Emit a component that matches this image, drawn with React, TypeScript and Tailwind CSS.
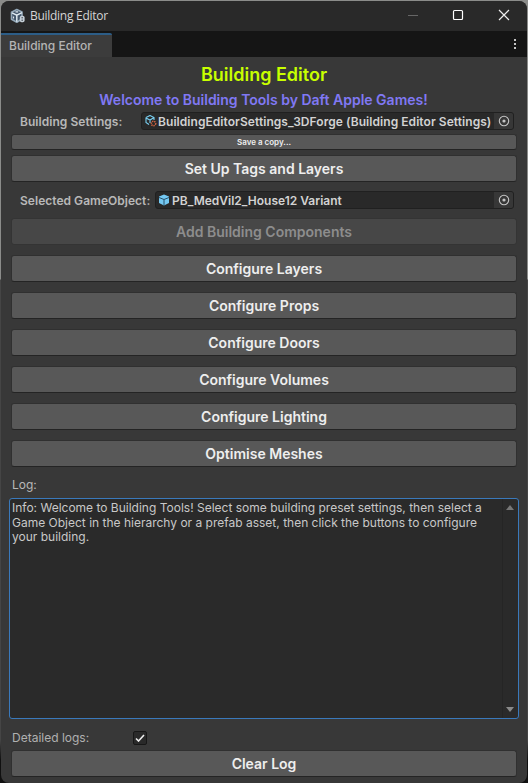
import React from "react";

function Target() {
  return (
    <span className="flex h-full w-[19px] shrink-0 items-center justify-center rounded-r-[2px] bg-[#373737] pl-px">
      <svg width="12" height="12" viewBox="0 0 12 12" fill="none">
        <circle cx="6" cy="6" r="4.7" stroke="#c4c4c4" strokeWidth="1.1" />
        <circle cx="6" cy="6" r="1.6" fill="#c4c4c4" />
      </svg>
    </span>
  );
}

function Btn({ label, className = "", disabled = false }: { label: string; className?: string; disabled?: boolean }) {
  return (
    <button
      disabled={disabled}
      className={
        "flex h-[27px] w-[506px] shrink-0 items-center justify-center rounded-[3px] border leading-none font-semibold " +
        (disabled
          ? "border-[#343434] bg-[#474747] text-[#8d8d8d] "
          : "border-[#303030] border-b-[#242424] bg-[#585858] text-[#eeeeee] ") +
        (className || "text-[14px]")
      }
    >
      {label}
    </button>
  );
}

const actions = ["Configure Layers", "Configure Props", "Configure Doors", "Configure Volumes", "Configure Lighting", "Optimise Meshes"];

export default function App() {
  return (
    <div className="h-[783px] w-[528px] overflow-hidden bg-[linear-gradient(to_bottom,#8b8c8a_0px,#8b8c8a_279px,#454545_280px,#454545_740px,#101010_760px)] pt-px pr-px pl-px font-['Inter','Liberation_Sans',sans-serif]">
      <div className="flex h-[782px] w-full flex-col overflow-hidden rounded-[8px] bg-[#383838]">
        <header className="flex h-[30px] shrink-0 items-center bg-[#292929] pr-px pl-[9px]">
          <svg width="16" height="16" viewBox="0 0 16 16" fill="none">
            <path d="M1.500 4.300 6.800 1.500 12 4v7l-5.200 3.200-5.300-3z" fill="#43566a" stroke="#93a8b8" strokeWidth="1.600" strokeLinejoin="round" />
            <path d="m2 4.800 4.800 2.400L12 4.600M6.800 7.200v6.500" stroke="#dfeaf1" strokeWidth="1.500" />
            <path d="M5.500 3.800h2.600M3.500 8.500v2" stroke="#dfeaf1" strokeWidth="1.200" />
            <rect x="9.800" y="7.800" width="4.800" height="6.400" rx="1.800" fill="#c6d0d8" />
            <path d="M11.500 9.800h1.400M11.500 12.200h1.400" stroke="#29323a" />
          </svg>
          <span className="ml-[4px] font-['Open_Sans','Noto_Sans',sans-serif] text-[12px] leading-none tracking-[-0.28px] text-[#d5d5d5]">Building Editor</span>
          <svg className="ml-auto" width="128" height="30" viewBox="0 0 128 30" fill="none">
            <path d="M10 14.500h10" stroke="#666" />
            <rect x="55.500" y="9.500" width="9" height="9" rx="1" stroke="#fff" strokeWidth="1.200" />
            <path d="m101 9 10 10m0-10L101 19" stroke="#eee" strokeWidth="1.200" />
          </svg>
        </header>
        <div className="flex h-[26px] shrink-0 bg-[#151515] pt-[2px] pr-px">
          <div className="flex w-[111px] items-center rounded-tr-[2px] border-t-2 border-[#2c5d87] bg-[#3c3c3c] pl-[8px] text-[12px] font-medium text-[#b4b4b4]">
            Building Editor
          </div>
          <svg className="ml-auto" width="23" height="24" viewBox="0 0 23 24" fill="#c4c4c4">
            <path d="M11 6h2v2h-2zM11 10h2v2h-2zM11 14h2v2h-2z" />
          </svg>
        </div>
        <main className="flex flex-col pl-[10px]">
          <h1 className="mt-[6px] h-[24px] w-[506px] text-center text-[18px] leading-[24px] font-semibold text-[#c8ff00]">Building Editor</h1>
          <h2 className="mt-[4px] h-[18px] w-[505px] text-center text-[14px] leading-[18px] font-semibold text-[#8078f4]">Welcome to Building Tools by Daft Apple Games!</h2>
          <div className="mt-[3px] flex h-[18px] w-[503px] items-center pl-[9px] text-[12px] font-semibold">
            <span className="w-[121px] whitespace-nowrap pt-px tracking-[0.05px] text-[#b8b8b8]">Building Settings:</span>
            <div className="flex h-[18px] w-[373px] items-center rounded-[3px] border border-[#202020] bg-[#292929]">
              <svg className="ml-[3px] shrink-0" width="12" height="12" viewBox="0 0 12 12" fill="none">
                <path d="m1 2.500 4-2 4 2v2.500M1 2.500v5l3 2M1 3l4 2 4-2.500M5 5v3" stroke="#79cff2" strokeWidth="1.100" />
                <circle cx="8.500" cy="8.500" r="2.200" stroke="#d96644" strokeWidth="1.500" strokeDasharray="1.200 .8" />
              </svg>
              <span className="ml-px flex-1 whitespace-nowrap pt-px tracking-[0.06px] text-[#d2d2d2]">BuildingEditorSettings_3DForge (Building Editor Settings)</span>
              <Target />
            </div>
          </div>
          <Btn label="Save a copy..." className="mt-[4px] !h-[16px] text-[8px]" />
          <Btn label="Set Up Tags and Layers" className="mt-[5px] text-[14px]" />
          <div className="mt-[9px] flex h-[18px] w-[503px] items-center pl-[9px] text-[12px] font-semibold">
            <span className="w-[135px] whitespace-nowrap pt-px tracking-[0.03px] text-[#b8b8b8]">Selected GameObject:</span>
            <div className="flex h-[18px] w-[359px] items-center rounded-[3px] border border-[#202020] bg-[#292929]">
              <svg className="ml-[3px] shrink-0" width="10" height="12" viewBox="0 0 10 12">
                <path d="m5 .5 5 2v6.500l-5 2.500L0 9V2.500z" fill="#74c9f3" />
                <path d="m0 3.500 5 2 5-2M5 5.500v6" stroke="#28506a" fill="none" />
              </svg>
              <span className="ml-[3px] flex-1 whitespace-nowrap pt-px text-[#d2d2d2]">PB_MedVil2_House12 Variant</span>
              <Target />
            </div>
          </div>
          <div className="mt-[9px] flex flex-col gap-[10px]">
            <Btn label="Add Building Components" disabled />
            {actions.map((a) => <Btn key={a} label={a} />)}
          </div>
          <label className="mt-[9px] h-[18px] pl-px text-[12px] leading-[18px] text-[#b8b8b8]">Log:</label>
          <div className="-ml-[2px] mt-[4px] flex h-[221px] w-[510px] justify-between rounded-[3px] border border-[#3a79bb] bg-[#2a2a2a]">
            <p className="pt-[2px] pl-[2px] text-[12px] leading-[14.500px] whitespace-nowrap text-[#c8c8c8]">
              Info: Welcome to Building Tools! Select some building preset settings, then select a<br />
              Game Object in the hierarchy or a prefab asset, then click the buttons to configure<br />
              your building.
            </p>
            <div className="flex w-[16px] shrink-0 flex-col items-center justify-between border-l border-[#252525] py-[6px] pr-[2px]">
              <svg width="8" height="5" fill="#777"><path d="M0 5 4 0l4 5z" /></svg>
              <svg width="8" height="5" fill="#8a8a8a"><path d="M0 0h8L4 5z" /></svg>
            </div>
          </div>
          <div className="mt-[12px] flex h-[14px] items-center pl-px text-[12px] text-[#b0b0b0]">
            <span className="w-[121px] leading-none">Detailed logs:</span>
            <span className="flex size-[14px] items-center justify-center rounded-[2px] border border-[#171717] bg-[#292929]">
              <svg width="10" height="8" viewBox="0 0 10 8" fill="none"><path d="m1 4.500 2.500 2.500L9 1" stroke="#eee" strokeWidth="1.600" /></svg>
            </span>
          </div>
          <Btn label="Clear Log" className="mt-[5px] text-[14px]" />
        </main>
      </div>
    </div>
  );
}
